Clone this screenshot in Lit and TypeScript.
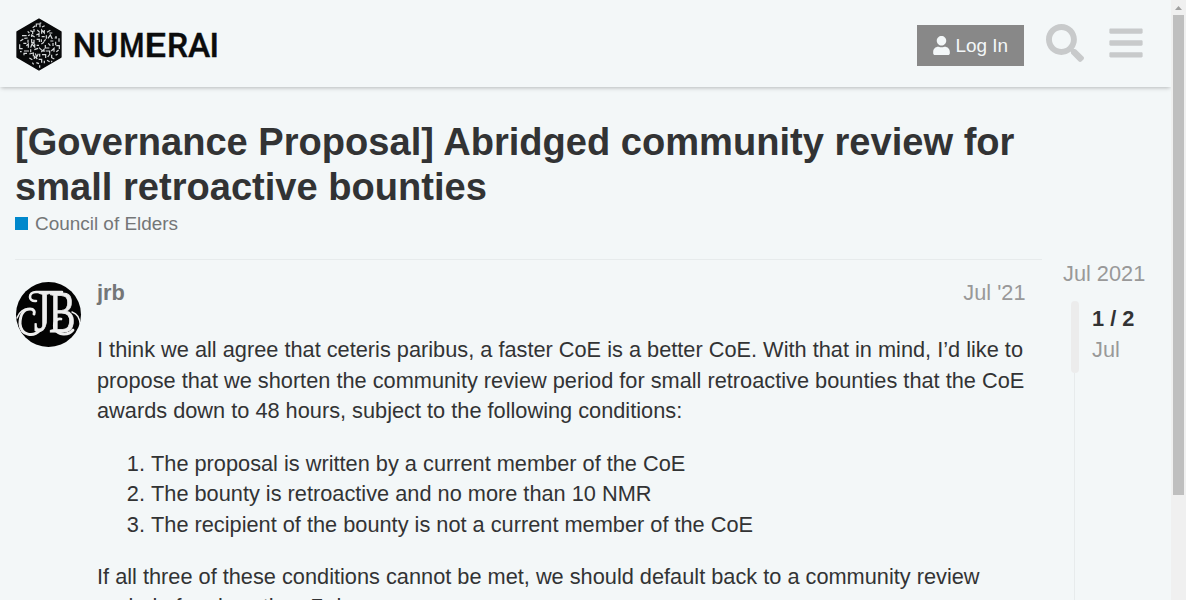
import { LitElement, html, css } from "lit";
import { customElement } from "lit/decorators.js";

@customElement("site-logo")
class SiteLogo extends LitElement {
  static styles = css`
    :host { display: block; width: 206px; height: 56px; }
    svg { display: block; }
    .word { font: 500 33.5px Roboto, "Liberation Sans", sans-serif; fill: #0b0c0d; stroke: #0b0c0d; stroke-width: .4; }
  `;
  render() {
    return html`<svg width="206" height="56" viewBox="0 0 206 56" role="img" aria-label="Numerai">
      <path d="M24 3.200 45.900 16V41L24 53.900 2.100 41V16Z" fill="#08090a" stroke="#08090a" stroke-width="1.500" stroke-linejoin="round" />
      <g transform="translate(-5 -1) scale(.33333)">
        <path fill="none" stroke="#d5d8d9" stroke-width="3.600" d="M79 35v-8h11v10M68 38l8-6M72 42v8M89 24h5M96 36l8-4M61 47l7 3v8M53 49l5 5M82 45l7 7M95 56V45l8 9v-9M111 52l10-6M118 54h9M36 62h14M54 62l6-3M65 66v-6l9 6M79 60l8-4v10M95 65h9M109 61v10M114 70l7-10 6 12M134 69l7 0M138 63v5M147 70v10M31 78l9-6M43 70l10-1M54 74v9M65 72v10l7 3v-11M80 73h8v8M94 73v8M101 80l6-7M121 78h9M129 84v9M137 80v11M29 88v13h9M40 85h9M49 92l6-5v11M62 98l4-11 8 9v-9M80 91h7M94 87l8-5M106 90v9h12M121 92l-6-7M139 92h9v10M30 110h5M42 108h15M62 103v9M73 104l11-4M87 98l9 8M94 111l8-8v8M107 108h12v8M124 108l8-8v10M139 110l7-5M42 121v-6h9M58 117l12-3v10M76 115l4 11 5-10M89 116v9M96 119h11v10M113 126l7-9M125 119v9l8 4M137 121l6-4M58 129l9 5M73 132v-8l9 8M86 133h9v10M103 137v8M111 136l8 4M79 143l8 3M89 151v7M125 137v5M67 143l4 5"/>
      </g>
      <text class="word" y="41" x="57.700 81.200">NU</text>
      <text class="word" transform="translate(104.300 41) scale(.86 1)">M</text>
      <text class="word" transform="translate(129.500 41) scale(1.140 1)">E</text>
      <text class="word" y="41" x="152 173 194.500">RAI</text>
    </svg>`;
  }
}

@customElement("site-header")
class SiteHeader extends LitElement {
  static styles = css`
    :host { display: flex; flex: none; box-sizing: border-box; height: 87px; padding: 0 28px 0 15px; align-items: center; background: #f3f7f8; box-shadow: 0 2px 4px -1px rgba(0,0,0,.25); position: relative; z-index: 1; }
    .spacer { flex: 1; }
    .login { display: flex; align-items: center; box-sizing: border-box; gap: 5.500px; width: 107px; height: 41px; margin: 4px 22px 0 0; padding: 0 0 0 16px; border: 0; background: #888; color: #f3f7f8; font: 18.930px/23px "Liberation Sans", Arial, sans-serif; white-space: nowrap; }
    svg { display: block; flex: none; }
    .tool { margin-bottom: 1px; }
    .search { margin-right: 25px; }
  `;
  render() {
    return html`
      <site-logo></site-logo>
      <div class="spacer"></div>
      <button class="login">
        <svg width="17" height="19" viewBox="0 0 448 512"><path fill="currentColor" d="M224 256c70.700 0 128-57.300 128-128S294.700 0 224 0 96 57.300 96 128s57.300 128 128 128zm89.600 32h-16.700c-22.200 10.200-46.900 16-72.900 16s-50.600-5.800-72.900-16h-16.700C60.200 288 0 348.200 0 422.400V464c0 26.500 21.500 48 48 48h352c26.500 0 48-21.500 48-48v-41.600c0-74.200-60.200-134.400-134.400-134.400z"/></svg>
        Log In
      </button>
      <svg class="tool search" width="38" height="38" viewBox="0 0 512 512"><path fill="#c8cacb" d="M505 442.700L405.300 343c-4.500-4.500-10.600-7-17-7H372c27.600-35.300 44-79.700 44-128C416 93.100 322.900 0 208 0S0 93.100 0 208s93.100 208 208 208c48.300 0 92.700-16.400 128-44v16.300c0 6.400 2.500 12.500 7 17l99.700 99.700c9.400 9.400 24.600 9.400 33.900 0l28.300-28.300c9.400-9.400 9.400-24.600.1-34zM208 336c-70.700 0-128-57.200-128-128 0-70.700 57.200-128 128-128 70.700 0 128 57.200 128 128 0 70.700-57.200 128-128 128z"/></svg>
      <svg class="tool" width="34" height="38" viewBox="0 0 448 512"><path fill="#c8cacb" d="M16 132h416c8.800 0 16-7.200 16-16V76c0-8.800-7.200-16-16-16H16C7.200 60 0 67.200 0 76v40c0 8.800 7.200 16 16 16zm0 160h416c8.800 0 16-7.200 16-16v-40c0-8.800-7.200-16-16-16H16c-8.800 0-16 7.200-16 16v40c0 8.800 7.200 16 16 16zm0 160h416c8.800 0 16-7.200 16-16v-40c0-8.800-7.200-16-16-16H16c-8.800 0-16 7.200-16 16v40c0 8.800 7.200 16 16 16z"/></svg>
    `;
  }
}

@customElement("user-avatar")
class UserAvatar extends LitElement {
  static styles = css`
    :host { display: block; width: 65px; height: 65px; border-radius: 50%; overflow: hidden; background: #030303; }
    svg { display: block; }
    .letter { font: 60px "Liberation Serif", serif; fill: #eee; stroke: #eee; stroke-width: .8; }
  `;
  render() {
    return html`<svg width="65" height="65" viewBox="0 0 65 65" aria-label="jrb">
      <text class="letter" transform="translate(18 49) scale(.72 1)">J</text>
      <text class="letter" transform="translate(33 50) scale(.66 1)">B</text>
      <g fill="none" stroke="#eee" stroke-linecap="round">
        <path stroke-width="2.600" d="M20 19C12 20 12 10 20 10H46"/>
        <path stroke-width="3" d="M24 48C17 56 5 53 4 42C4 34 7 27 14 27C18 27 19 30 18 32"/>
        <path stroke-width="1.600" d="M1 36C3 30 8 26 14 27"/>
        <path stroke-width="2.800" d="M57 48C52 54 42 53 39 47C37 41 40 36 45 37"/>
        <path stroke-width="1.400" d="M56 30C62 32 64 38 64 43"/>
      </g>
    </svg>`;
  }
}

@customElement("topic-post")
class TopicPost extends LitElement {
  static styles = css`
    :host { display: flex; box-sizing: border-box; width: 1027px; border-top: 1px solid #e7ebec; padding: 22px 0 0 1px; gap: 16px; }
    user-avatar { flex: none; }
    .body { width: 928.500px; flex: none; }
    .meta { display: flex; justify-content: space-between; height: 22px; line-height: 22px; color: #999; margin-bottom: 31px; }
    .name { color: #747677; font-weight: 700; }
    .content { color: #323334; line-height: 30.500px; }
    p { margin: 0 0 22px; white-space: nowrap; }
    p:last-child { padding-top: .25px; line-height: 30px; }
    ol { margin: 0 0 22px; padding-left: 54px; }
  `;
  render() {
    return html`
      <user-avatar></user-avatar>
      <div class="body">
        <div class="meta"><span class="name">jrb</span><span>Jul '21</span></div>
        <div class="content">
          <p>I think we all agree that ceteris paribus, a faster CoE is a better CoE. With that in mind, I’d like to<br>propose that we shorten the community review period for small retroactive bounties that the CoE<br>awards down to 48 hours, subject to the following conditions:</p>
          <ol>
            <li>The proposal is written by a current member of the CoE</li>
            <li>The bounty is retroactive and no more than 10 NMR</li>
            <li>The recipient of the bounty is not a current member of the CoE</li>
          </ol>
          <p>If all three of these conditions cannot be met, we should default back to a community review<br>period of no less than 7 days.</p>
        </div>
      </div>
    `;
  }
}

@customElement("topic-timeline")
class TopicTimeline extends LitElement {
  static styles = css`
    :host { display: flex; flex-direction: column; height: 345px; color: #999; line-height: 26px; }
    .start { margin-bottom: 14px; padding-top: 2px; white-space: nowrap; }
    .track { display: flex; flex: 1; gap: 13px; padding-left: 8px; }
    .rail { display: flex; flex-direction: column; width: 8px; flex: none; }
    .handle { height: 72px; border-radius: 4px; background: #ececec; }
    .line { flex: 1; width: 1px; margin-left: 3px; background: #e7ebec; }
    .count { color: #323334; font-weight: 700; padding-top: 5px; margin-bottom: 5px; }
  `;
  render() {
    return html`
      <div class="start">Jul 2021</div>
      <div class="track">
        <div class="rail"><div class="handle"></div><div class="line"></div></div>
        <div><div class="count">1 / 2</div><div>Jul</div></div>
      </div>
    `;
  }
}

@customElement("app-root")
class AppRoot extends LitElement {
  static styles = css`
    :host { display: flex; width: 1186px; height: 600px; overflow: hidden; background: #f3f7f8; font: 21.750px "Liberation Sans", Arial, sans-serif; }
    .page { display: flex; flex-direction: column; width: 1171px; flex: none; overflow: hidden; }
    main { padding: 33px 15px 0; }
    h1 { margin: 0; font-size: 38.080px; line-height: 45px; font-weight: 700; color: #323334; white-space: nowrap; }
    .category { display: flex; align-items: center; gap: 7px; height: 24px; margin: 2px 0 23px; font-size: 18.930px; line-height: 24px; color: #747677; }
    .swatch { width: 13px; height: 13px; margin-bottom: 1px; background: #08c; }
    .columns { display: flex; gap: 21px; align-items: flex-start; }
    .scrollbar { display: flex; flex-direction: column; align-items: center; width: 15px; background: #f0f0f0; }
    .arrow { display: block; height: 15px; }
    .thumb { width: 11px; height: 480px; background: #bfbfbf; }
  `;
  render() {
    return html`
      <div class="page">
        <site-header></site-header>
        <main>
          <h1>[Governance Proposal] Abridged community review for<br>small retroactive bounties</h1>
          <div class="category"><span class="swatch"></span>Council of Elders</div>
          <div class="columns"><topic-post></topic-post><topic-timeline></topic-timeline></div>
        </main>
      </div>
      <div class="scrollbar">
        <svg class="arrow" width="15" height="15"><path d="M4 10 7.500 6 11 10Z" fill="#a0a0a0"/></svg>
        <div class="thumb"></div>
      </div>
    `;
  }
}
